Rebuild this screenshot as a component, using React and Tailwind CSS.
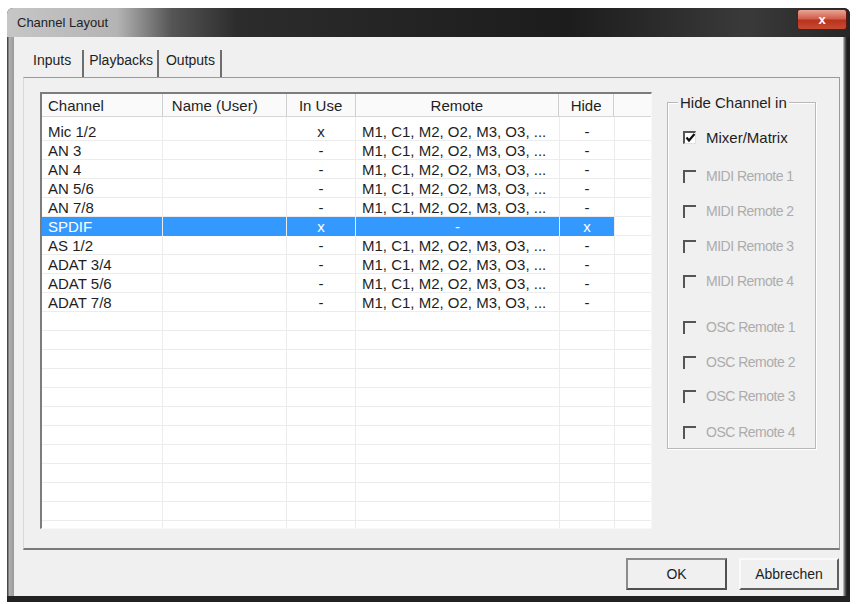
const REMOTE = 'M1, C1, M2, O2, M3, O3, ...'

const rows = [
  { ch: 'Mic 1/2', use: 'x', remote: REMOTE, hide: '-' },
  { ch: 'AN 3', use: '-', remote: REMOTE, hide: '-' },
  { ch: 'AN 4', use: '-', remote: REMOTE, hide: '-' },
  { ch: 'AN 5/6', use: '-', remote: REMOTE, hide: '-' },
  { ch: 'AN 7/8', use: '-', remote: REMOTE, hide: '-' },
  { ch: 'SPDIF', use: 'x', remote: '-', hide: 'x', sel: true },
  { ch: 'AS 1/2', use: '-', remote: REMOTE, hide: '-' },
  { ch: 'ADAT 3/4', use: '-', remote: REMOTE, hide: '-' },
  { ch: 'ADAT 5/6', use: '-', remote: REMOTE, hide: '-' },
  { ch: 'ADAT 7/8', use: '-', remote: REMOTE, hide: '-' },
]

const EMPTY_ROWS = 12
const COLS = [121, 124, 69, 204, 55]

const options = [
  { label: 'Mixer/Matrix', checked: true, enabled: true, mt: 'mt-[24px]' },
  { label: 'MIDI Remote 1', mt: 'mt-[19px]' },
  { label: 'MIDI Remote 2', mt: 'mt-[15px]' },
  { label: 'MIDI Remote 3', mt: 'mt-[15px]' },
  { label: 'MIDI Remote 4', mt: 'mt-[15px]' },
  { label: 'OSC Remote 1', mt: 'mt-[26px]' },
  { label: 'OSC Remote 2', mt: 'mt-[15px]' },
  { label: 'OSC Remote 3', mt: 'mt-[14px]' },
  { label: 'OSC Remote 4', mt: 'mt-[16px]' },
]

function Checkbox({ checked, enabled }) {
  return (
    <span
      className={
        'relative w-[13px] h-[13px] shrink-0 border-t-2 border-l-2 border-[#555] ' +
        (enabled ? 'bg-white border-r border-b border-r-[#e0e0e0] border-b-[#e0e0e0]' : 'bg-[#f0f0f0]')
      }
    >
      {checked && (
        <svg className="absolute left-[0px] top-[-1px] w-[11px] h-[11px]" viewBox="0 0 11 11">
          <path d="M1.5 5.5 L4 8.5 L9.5 2" fill="none" stroke="#111" strokeWidth="2.2" />
        </svg>
      )}
    </span>
  )
}

function Row({ r }) {
  const base = 'h-[19px] flex items-center border-r border-[#ececec] shrink-0'
  const sel = r.sel ? 'bg-[#3399ff] text-white' : ''
  return (
    <div className="flex border-b border-[#ececec] h-[19px]">
      <div className={`${base} ${sel} w-[121px] pl-[6px]`}>{r.ch}</div>
      <div className={`${base} ${sel} w-[124px]`}></div>
      <div className={`${base} ${sel} w-[69px] justify-center`}>{r.use}</div>
      <div className={`${base} ${sel} w-[204px] ${r.sel ? 'justify-center' : 'pl-[6px]'} whitespace-nowrap`}>{r.remote}</div>
      <div className={`${base} ${sel} w-[55px] justify-center`}>{r.hide}</div>
      <div className={`${base} w-[37px] border-r-0`}></div>
    </div>
  )
}

function EmptyRow() {
  return (
    <div className="flex border-b border-[#ececec] h-[19px]">
      {COLS.map((w) => (
        <div key={w} className="h-[19px] border-r border-[#ececec]" style={{ width: w }}></div>
      ))}
    </div>
  )
}

export default function App() {
  return (
    <div
      className="w-[857px] h-[604px] bg-white pt-[8px] pl-[7px] overflow-hidden text-[#1e1e1e]"
      style={{ fontFamily: '"Liberation Sans", Arial, sans-serif' }}
    >
      <div className="w-[843px] h-[594px] flex flex-col rounded-t-[6px] overflow-hidden bg-[#2a2a2a]">
        {/* Title bar */}
        <div className="h-[29px] flex items-start justify-between pr-[3px] bg-[linear-gradient(to_right,#c6c6c6_0px,#b4b4b4_110px,#555555_165px,#2c2c2c_230px,#1c1c1c_560px,#3a3a3a_740px,#262626_843px)]">
          <span className="pl-[10px] pt-[7px] text-[13px] leading-[16px] text-[#222]">Channel Layout</span>
          <div className="mt-[1px] w-[50px] h-[21px] rounded-[3px] border border-[#5c1a12] bg-[linear-gradient(to_bottom,#e9a596_0%,#d0604c_45%,#b83320_55%,#c84a30_100%)] flex items-center justify-center">
            <span className="text-white font-bold text-[13px] leading-none">x</span>
          </div>
        </div>

        {/* Body */}
        <div className="flex-1 flex">
          <div className="w-[7px] bg-[linear-gradient(to_right,#4a4a4a_0px,#4a4a4a_1px,#b0b0b0_2px,#9a9a9a_7px)]"></div>
          <div className="w-[829px] flex flex-col bg-[#f0f0f0]">
            {/* Tabs */}
            <div className="h-[40px] flex items-start pt-[14px] pl-[19px] text-[14px] leading-[18px]">
              <span>Inputs</span>
              <span className="ml-[11px] w-[2px] h-[27px] bg-[#6e6e6e] mt-[-1px]"></span>
              <span className="ml-[5px]">Playbacks</span>
              <span className="ml-[4px] w-[2px] h-[27px] bg-[#6e6e6e] mt-[-1px]"></span>
              <span className="ml-[7px]">Outputs</span>
              <span className="ml-[5px] w-[2px] h-[27px] bg-[#6e6e6e] mt-[-1px]"></span>
            </div>

            {/* Tab panel */}
            <div className="ml-[9px] w-[817px] h-[473px] border border-[#9a9a9a] border-l-[#d8d8d8] border-b-2 border-b-[#7a7a7a] flex items-start pt-[14px] pl-[16px] text-[15px] leading-[17px]">
              {/* List */}
              <div className="w-[612px] h-[437px] bg-white border-t-2 border-l-2 border-[#7c7c7c] border-r border-b border-r-[#f8f8f8] border-b-[#f8f8f8] overflow-hidden">
                <div className="flex h-[23px] border-b border-[#d6d6d6] bg-[#fafafa]">
                  <div className="w-[121px] pl-[6px] flex items-center border-r border-[#cfcfcf]">Channel</div>
                  <div className="w-[124px] pl-[9px] flex items-center border-r border-[#cfcfcf]">Name (User)</div>
                  <div className="w-[69px] flex items-center justify-center border-r border-[#cfcfcf]">In Use</div>
                  <div className="w-[204px] flex items-center justify-center border-r border-[#cfcfcf]">Remote</div>
                  <div className="w-[55px] flex items-center justify-center border-r border-[#cfcfcf]">Hide</div>
                  <div className="w-[37px]"></div>
                </div>
                <div className="h-[5px] flex">
                  {COLS.map((w) => (
                    <div key={w} className="border-r border-[#ececec]" style={{ width: w }}></div>
                  ))}
                </div>
                {rows.map((r) => (
                  <Row key={r.ch} r={r} />
                ))}
                {Array.from({ length: EMPTY_ROWS }).map((_, i) => (
                  <EmptyRow key={i} />
                ))}
              </div>

              {/* Group box */}
              <div className="relative ml-[15px] mt-[10px] w-[149px] h-[347px] border border-[#b8b8b8] shadow-[inset_1px_1px_0_#ffffff,1px_1px_0_#ffffff] flex flex-col pl-[15px]">
                <span className="absolute left-[10px] top-[-9px] px-[2px] bg-[#f0f0f0] leading-[17px]">Hide Channel in</span>
                {options.map((o) => (
                  <div key={o.label} className={`${o.mt} h-[20px] flex items-center gap-[10px]`}>
                    <Checkbox checked={o.checked} enabled={o.enabled} />
                    <span
                      className={
                        o.enabled
                          ? 'text-[#1e1e1e] whitespace-nowrap'
                          : 'text-[#acacac] whitespace-nowrap text-[14px] tracking-[-0.5px]'
                      }
                    >
                      {o.label}
                    </span>
                  </div>
                ))}
              </div>
            </div>

            {/* Buttons */}
            <div className="flex justify-end gap-[12px] pr-[4px] mt-[8px] text-[14px]">
              <button className="w-[101px] h-[32px] bg-[#f0f0f0] border-2 border-[#8c8c8c] border-r-[#505050] border-b-[#505050] flex items-center justify-center">
                OK
              </button>
              <button className="w-[100px] h-[32px] bg-[#f0f0f0] border-2 border-[#fafafa] border-r-[#606060] border-b-[#606060] flex items-center justify-center">
                Abbrechen
              </button>
            </div>
          </div>
          <div className="w-[7px] bg-[linear-gradient(to_right,#d0d0d0_0px,#5a5a5a_2px,#1e1e1e_4px,#1e1e1e_7px)]"></div>
        </div>
        <div className="h-[6px] bg-[#222]"></div>
      </div>
    </div>
  )
}
